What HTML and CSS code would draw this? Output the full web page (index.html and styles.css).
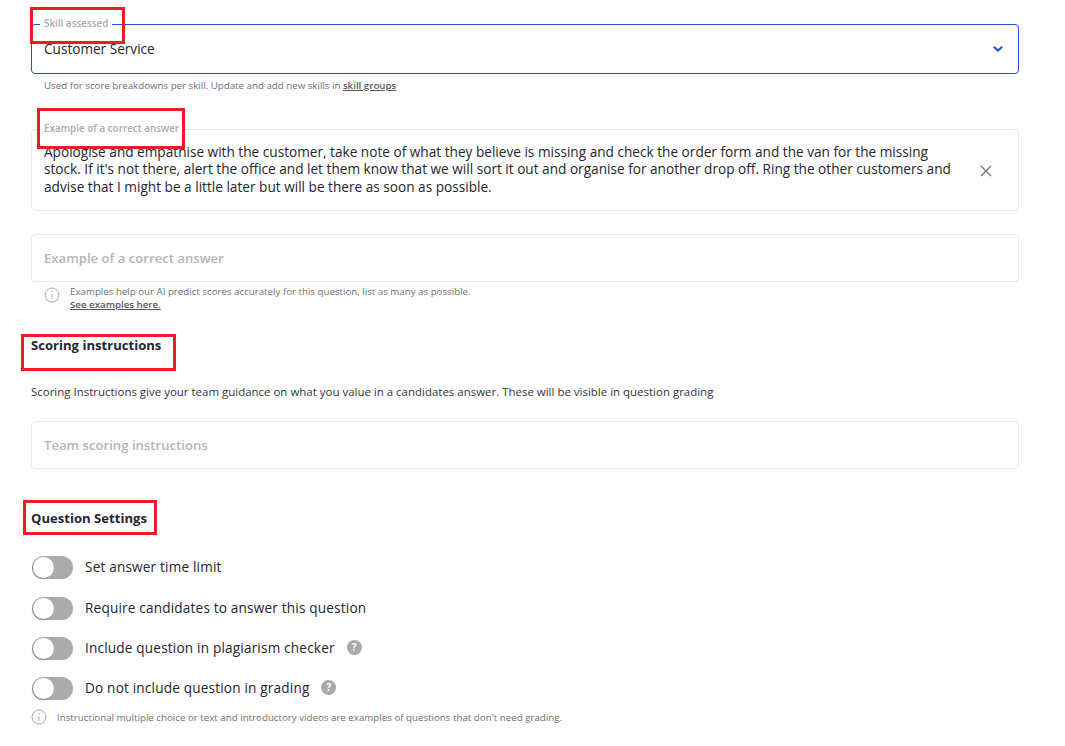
FILE: index.html
```html
<!DOCTYPE html>
<html lang="en">
<head>
    <meta charset="UTF-8">
    <title>Question settings</title>
    <link rel="stylesheet" href="styles.css">
</head>
<body>
    <div class="page">
        <div class="field field-select">
            <span class="field-label label-select">Skill assessed</span>
            <span class="field-value">Customer Service</span>
            <svg class="chevron" width="12" height="8" viewBox="0 0 12 8"><path d="M1.8 1.7L6 5.6l4.2-3.9" fill="none" stroke="#1f4fe0" stroke-width="2"/></svg>
        </div>
        <p class="helper">Used for score breakdowns per skill. Update and add new skills in <a href="#">skill groups</a></p>

        <div class="field field-answer">
            <span class="field-label label-answer">Example of a correct answer</span>
            <p class="answer-text">Apologise and empathise with the customer, take note of what they believe is missing and check the order form and the van for the missing stock. If it's not there, alert the office and let them know that we will sort it out and organise for another drop off. Ring the other customers and advise that I might be a little later but will be there as soon as possible.</p>
            <svg class="close" width="12" height="12" viewBox="0 0 12 12"><path d="M1 1l10 10M11 1L1 11" fill="none" stroke="#6f7075" stroke-width="1.3"/></svg>
        </div>

        <div class="field field-empty examples-input">Example of a correct answer</div>
        <div class="hint examples-hint">
            <svg class="info" width="16" height="16" viewBox="0 0 16 16"><circle cx="8" cy="8" r="7" fill="none" stroke="#a9aaae"/><path d="M8 7v5M8 4v1.4" stroke="#a9aaae" fill="none"/></svg>
            <p>Examples help our AI predict scores accurately for this question, list as many as possible.<br><a href="#">See examples here.</a></p>
        </div>

        <h2 class="heading scoring-heading">Scoring instructions</h2>
        <p class="scoring-text">Scoring Instructions give your team guidance on what you value in a candidates answer. These will be visible in question grading</p>
        <div class="field field-empty">Team scoring instructions</div>

        <h2 class="heading settings-heading">Question Settings</h2>
        <div class="toggles">
            <div class="toggle-row row-1"><span class="toggle"></span>Set answer time limit</div>
            <div class="toggle-row row-2"><span class="toggle"></span>Require candidates to answer this question</div>
            <div class="toggle-row row-3"><span class="toggle"></span>Include question in plagiarism checker<span class="help help-3">?</span></div>
            <div class="toggle-row row-4"><span class="toggle"></span>Do not include question in grading<span class="help help-4">?</span></div>
        </div>
        <div class="hint grading-hint">
            <svg class="info" width="16" height="16" viewBox="0 0 16 16"><circle cx="8" cy="8" r="7" fill="none" stroke="#a9aaae"/><path d="M8 7v5M8 4v1.4" stroke="#a9aaae" fill="none"/></svg>
            <p>Instructional multiple choice or text and introductory videos are examples of questions that don't need grading.</p>
        </div>
    </div>

    <div class="mark mark-1"></div>
    <div class="mark mark-2"></div>
    <div class="mark mark-3"></div>
    <div class="mark mark-4"></div>
</body>
</html>
```

FILE: styles.css
```css
* { box-sizing: border-box; }
html, body {
    margin: 0;
    background: #fff;
}
body {
    position: relative;
    height: 746px;
    overflow: hidden;
    font-family: "Open Sans", sans-serif;
    color: #24252d;
}
p, h2 { margin: 0; }
a { color: #55565c; font-weight: 600; }

.page {
    width: 988px;
    margin-left: 31px;
    padding-top: 24px;
}

.field {
    position: relative;
    border: 1px solid #e8e8ea;
    border-radius: 4px;
    display: flex;
    align-items: center;
}
.field-select {
    height: 50px;
    border-color: #1f4fe0;
    padding: 0 14px 0 12px;
    justify-content: space-between;
}
.field-value {
    margin-bottom: 1px;
    font-size: 13.6px;
    font-weight: 500;
}
.field-label {
    position: absolute;
    left: 8px;
    top: -8px;
    padding: 0 4px;
    background: #fff;
    font-size: 9.9px;
    line-height: 13px;
    font-weight: 600;
    color: #aaabb0;
}
.helper {
    margin: 5px 0 0 13px;
    font-size: 9.72px;
    line-height: 13px;
    color: #6f7076;
    font-weight: 500;
}
.field-answer {
    height: 82px;
    margin-top: 37px;
    padding: 0 26px 0 12px;
    justify-content: space-between;
}
.answer-text {
    width: 912px;
    margin-bottom: 2px;
    font-size: 13.63px;
    line-height: 17.5px;
    font-weight: 500;
}
.close { margin-top: 1px; }
.field-empty {
    height: 48px;
    padding-left: 12px;
    font-size: 13.15px;
    font-weight: 600;
    color: #b4b5b9;
}
.examples-input { margin-top: 23px; }

.hint {
    display: flex;
    color: #6f7076;
    font-size: 9.72px;
    line-height: 13px;
    font-weight: 500;
}
.examples-hint {
    margin: 3px 0 0 13px;
    gap: 10px;
}
.examples-hint .info { margin-top: 2px; }
.heading {
    font-size: 13.1px;
    line-height: 18px;
    font-weight: 700;
}
.scoring-heading { margin-top: 25px; }
.scoring-text {
    margin: 30px 0 21px;
    font-size: 11.47px;
    line-height: 16px;
    color: #33343c;
}
.settings-heading { margin-top: 40px; }

.toggles {
    margin-top: 27px;
    padding-left: 1px;
}
.toggle-row {
    display: flex;
    align-items: center;
    height: 24px;
    font-size: 13.6px;
    font-weight: 500;
    letter-spacing: .18px;
}
.row-2 { margin-top: 17px; }
.row-3 { margin-top: 16px; }
.row-4 { margin-top: 16px; }
.toggle {
    position: relative;
    flex: none;
    width: 41px;
    height: 23px;
    margin: 3px 12px 0 0;
    border-radius: 12px;
    background: #aaabaf;
}
.toggle::after {
    content: "";
    position: absolute;
    left: 1px;
    top: 1px;
    width: 21px;
    height: 21px;
    border-radius: 50%;
    background: #fff;
    box-shadow: -1px 1px 1px rgba(70, 70, 75, .35);
}
.help {
    width: 15px;
    height: 15px;
    border-radius: 50%;
    background: #a9aaae;
    color: #fff;
    font-size: 10px;
    line-height: 15px;
    font-weight: 700;
    text-align: center;
    letter-spacing: 0;
}
.help-3 { margin-left: 12px; }
.help-4 { margin-left: 12px; }
.grading-hint {
    margin-top: 10px;
    gap: 10px;
    align-items: center;
    font-size: 9.74px;
}

.mark {
    position: absolute;
    border: 3px solid #ed1c24;
}
.mark-1 { left: 30px; top: 7px; width: 95px; height: 37px; }
.mark-2 { left: 37px; top: 108px; width: 148px; height: 41px; }
.mark-3 { left: 21px; top: 334px; width: 155px; height: 37px; }
.mark-4 { left: 23px; top: 500px; width: 134px; height: 35px; }
```
